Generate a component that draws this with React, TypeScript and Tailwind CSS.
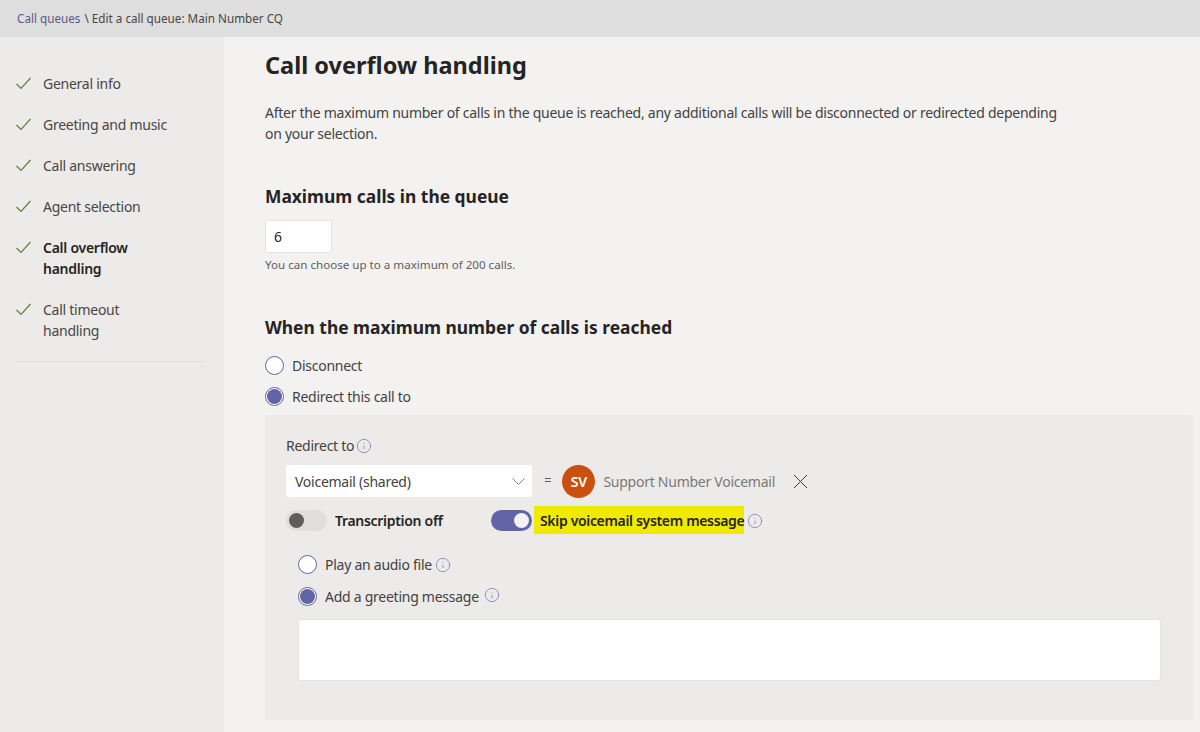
import { Info } from "lucide-react";

const steps = [
  { label: "General info" },
  { label: "Greeting and music" },
  { label: "Call answering" },
  { label: "Agent selection" },
  { label: "Call overflow handling", active: true },
  { label: "Call timeout handling" },
];

function InfoIcon({ className }: { className: string }) {
  return <Info size={16} strokeWidth={1.25} className={`text-[#7f81b8] shrink-0 ${className}`} />;
}

function Radio({ checked, label, info }: { checked?: boolean; label: string; info?: React.ReactNode }) {
  return (
    <div className="flex items-center h-5">
      <span className="w-[19px] h-[19px] rounded-full border border-[#6264a7] bg-white flex items-center justify-center shrink-0">
        {checked && <span className="w-[15px] h-[15px] rounded-full bg-[#6264a7]" />}
      </span>
      <span className="ml-2 text-[14px] tracking-[-0.26px] text-[#424242]">{label}</span>
      {info}
    </div>
  );
}

export default function App() {
  return (
    <div className="h-[732px] overflow-hidden bg-[#f3f2f1] font-['Noto_Sans',sans-serif] text-[#252423]">
      <div className="h-[37px] bg-[#dedede] pl-[17px] flex items-center text-[11.7px] text-[#484644]">
        <span className="text-[#5b5a85]">Call queues</span>
        <span className="ml-1">\ Edit a call queue: Main Number CQ</span>
      </div>
      <div className="flex">
        <aside className="w-[224px] h-[695px] bg-[#edebe9] pl-[16px] pt-[36px] shrink-0">
          <ul className="w-[188px] border-b border-[#e1dfdd] pb-[20px] flex flex-col gap-[20px]">
            {steps.map((s) => (
              <li key={s.label} className="flex items-start">
                <svg width="15" height="13" viewBox="0 0 15 13" fill="none" stroke="#5f7f3a" strokeWidth="1.2" className="mt-[4px] shrink-0">
                  <path d="M0.5 7 L5 11.5 L14.5 1" />
                </svg>
                <span className={`ml-[12px] w-[125px] text-[14px] leading-[21px] tracking-[-0.26px] ${s.active ? "font-semibold text-[#252423]" : "text-[#484644]"}`}>
                  {s.label}
                </span>
              </li>
            ))}
          </ul>
        </aside>
        <main className="flex-1 pl-[41px] pr-[7px]">
          <h1 className="mt-[11px] text-[23.5px] leading-[34px] font-bold">Call overflow handling</h1>
          <p className="mt-[20px] w-[810px] text-[14px] leading-[21px] tracking-[-0.26px] text-[#424242]">
            After the maximum number of calls in the queue is reached, any additional calls will be disconnected or redirected depending on your selection.
          </p>
          <h2 className="mt-[39px] text-[17.4px] leading-[26px] font-bold">Maximum calls in the queue</h2>
          <div className="mt-[11px] w-[67px] h-[33px] bg-white rounded-[3px] border border-[#e6e4e2] pl-[8px] flex items-center text-[14px]">6</div>
          <p className="mt-[4px] text-[11.6px] leading-[16px] text-[#605e5c]">You can choose up to a maximum of 200 calls.</p>
          <h2 className="mt-[41px] text-[17.4px] leading-[26px] font-bold">When the maximum number of calls is reached</h2>
          <div className="mt-[15px] flex flex-col gap-[11px]">
            <Radio label="Disconnect" />
            <Radio checked label="Redirect this call to" />
          </div>
          <section className="mt-[9px] h-[305px] bg-[#edebe9] rounded-[3px] pl-[21px] pt-[20px]">
            <div className="flex items-center h-5 text-[14px] tracking-[-0.26px] text-[#424242]">
              Redirect to
              <InfoIcon className="ml-[2px] mt-[1px]" />
            </div>
            <div className="mt-[10px] flex items-center h-8">
              <div className="w-[246px] h-[32px] bg-white rounded-[3px] pl-[9px] pr-[7px] flex items-center justify-between text-[14px] tracking-[-0.26px] text-[#424242]">
                Voicemail (shared)
                <svg width="13" height="7" viewBox="0 0 13 7" fill="none" stroke="#8a8886" strokeWidth="1">
                  <path d="M0.5 0.5 L6.5 6.5 L12.5 0.5" />
                </svg>
              </div>
              <span className="ml-[12px] text-[13px] text-[#605e5c]">=</span>
              <span className="ml-[11px] w-[33px] h-[33px] rounded-full bg-[#ca5010] text-white text-[14px] font-semibold flex items-center justify-center">SV</span>
              <span className="ml-[8px] w-[172px] whitespace-nowrap text-[14px] tracking-[-0.26px] text-[#7a7876]">Support Number Voicemail</span>
              <svg width="15" height="15" viewBox="0 0 15 15" fill="none" stroke="#3b3a39" strokeWidth="1" className="ml-[18px]">
                <path d="M1 1 L14 14 M14 1 L1 14" />
              </svg>
            </div>
            <div className="mt-[11px] flex items-center h-[24px]">
              <span className="w-[41px] h-[21px] rounded-full bg-[#e1dfdd] flex items-center pl-[3px]">
                <span className="w-[15px] h-[15px] rounded-full bg-[#605e5c]" />
              </span>
              <span className="ml-[8px] w-[156px] text-[14px] tracking-[-0.3px] font-semibold">Transcription off</span>
              <span className="w-[41px] h-[21px] rounded-full bg-[#6264a7] flex items-center justify-end pr-[3px]">
                <span className="w-[15px] h-[15px] rounded-full bg-[#f3f2f1]" />
              </span>
              <span className="ml-[2px] h-[28px] w-[210px] bg-[#f0ea00] pl-[6px] flex items-center text-[14px] tracking-[-0.33px] font-semibold whitespace-nowrap">Skip voicemail system message</span>
              <InfoIcon className="ml-[3px] mt-[2px]" />
            </div>
            <div className="mt-[22px] ml-[12px] flex flex-col gap-[12px]">
              <Radio label="Play an audio file" info={<InfoIcon className="ml-[3px] mt-[1px]" />} />
              <Radio checked label="Add a greeting message" info={<InfoIcon className="ml-[5px] mt-[-2px]" />} />
            </div>
            <div className="mt-[13px] ml-[12px] w-[863px] h-[62px] bg-white rounded-[3px] border border-[#e6e4e2]" />
          </section>
        </main>
      </div>
    </div>
  );
}
